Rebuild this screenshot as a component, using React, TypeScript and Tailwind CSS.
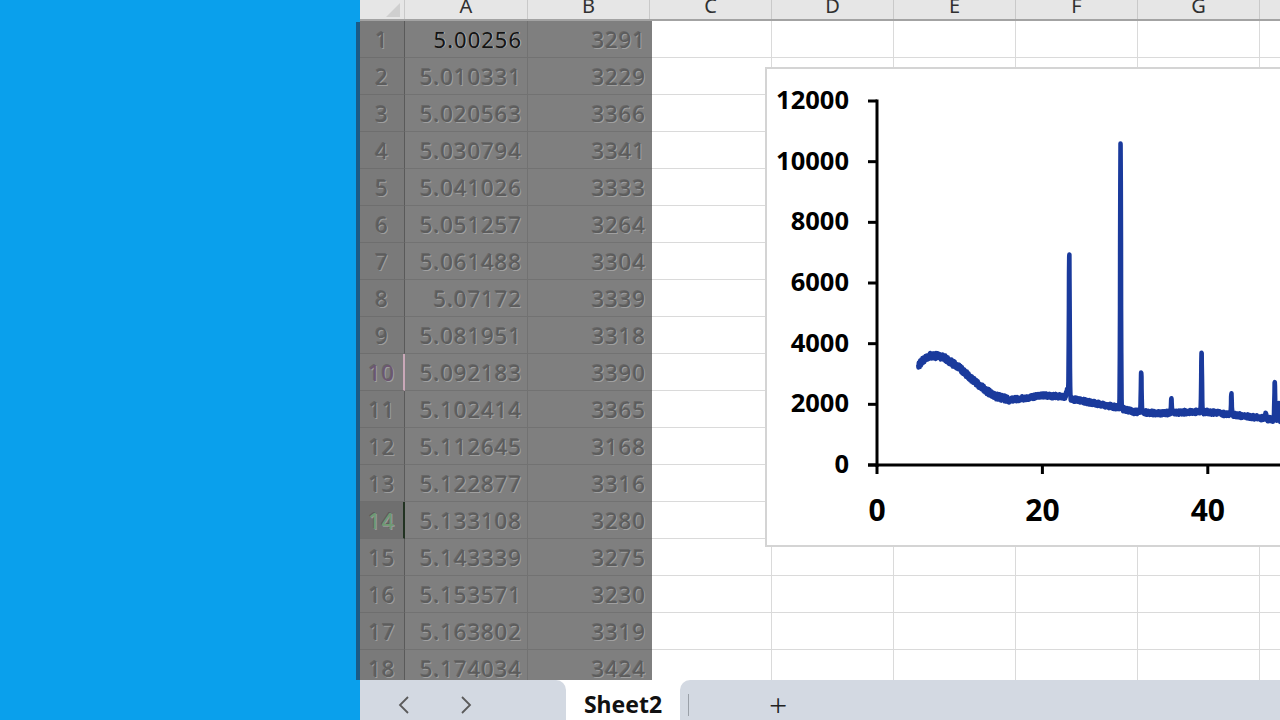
import React from "react";

const FONT = { fontFamily: '"Noto Sans", "Open Sans", sans-serif' };

// rows of the sheet: [x, y]
const rows: [string, string][] = [
  ["5.00256", "3291"],
  ["5.010331", "3229"],
  ["5.020563", "3366"],
  ["5.030794", "3341"],
  ["5.041026", "3333"],
  ["5.051257", "3264"],
  ["5.061488", "3304"],
  ["5.07172", "3339"],
  ["5.081951", "3318"],
  ["5.092183", "3390"],
  ["5.102414", "3365"],
  ["5.112645", "3168"],
  ["5.122877", "3316"],
  ["5.133108", "3280"],
  ["5.143339", "3275"],
  ["5.153571", "3230"],
  ["5.163802", "3319"],
  ["5.174034", "3424"],
];

const columns = ["C", "D", "E", "F", "G"];

// background of the scan, piecewise linear
const base: [number, number][] = [
  [5, 3250], [5.5, 3450], [6.5, 3620], [8, 3560], [10, 3200], [12, 2700],
  [14, 2300], [16, 2150], [18, 2210], [20, 2300], [22, 2260], [24, 2150],
  [27, 2000], [29, 1900], [31, 1760], [34, 1700], [38, 1750], [40, 1750],
  [43, 1660], [46, 1560], [48, 1490], [50, 1450],
];

const peaks: [number, number, number][] = [
  [23.0, 250, 0.12],
  [23.25, 4800, 0.05],
  [29.45, 8900, 0.05],
  [31.95, 1350, 0.05],
  [35.6, 550, 0.05],
  [39.25, 1950, 0.05],
  [42.85, 650, 0.05],
  [47.0, 150, 0.08],
  [48.1, 1250, 0.05],
  [48.6, 550, 0.05],
];

function baseAt(t: number) {
  for (let i = 1; i < base.length; i++) {
    const [t0, v0] = base[i - 1];
    const [t1, v1] = base[i];
    if (t <= t1) return v0 + ((t - t0) / (t1 - t0)) * (v1 - v0);
  }
  return base[base.length - 1][1];
}

let seed = 7;
function rand() {
  seed = (seed * 1103515245 + 12345) % 2147483648;
  return seed / 2147483648;
}

const X = (t: number) => 110 + t * 8.27;
const Y = (v: number) => 396 - v * 0.030333;

const points: string[] = [];
for (let t = 5; t <= 50; t += 0.02) {
  let v = baseAt(t) + (rand() - 0.5) * (t < 16 ? 200 : 150);
  for (const [c, h, s] of peaks) {
    const d = (t - c) / s;
    v += h * Math.exp(-d * d * 0.5);
  }
  points.push(`${X(t).toFixed(1)},${Y(v).toFixed(1)}`);
}

function Chart() {
  const yTicks = [0, 2000, 4000, 6000, 8000, 10000, 12000];
  const xTicks = [0, 20, 40, 60];
  return (
    <div className="absolute left-[405px] top-[67px] h-[480px] w-[530px] overflow-hidden border-2 border-[#d4d4d4] bg-white">
      <svg width="515" height="480" style={{ fontFamily: '"Open Sans", "Noto Sans", sans-serif' }}>
        <polyline
          points={points.join(" ")}
          fill="none"
          stroke="#1a3a9c"
          strokeWidth="4.5"
          strokeLinejoin="round"
          strokeLinecap="round"
        />
        <line x1="110" y1="30.5" x2="110" y2="398" stroke="#000" strokeWidth="3" />
        <line x1="101" y1="396" x2="515" y2="396" stroke="#000" strokeWidth="3" />
        {yTicks.map((v) => (
          <g key={v}>
            <line x1="101" y1={Y(v)} x2="110" y2={Y(v)} stroke="#000" strokeWidth="3" />
            <text x="82" y={Y(v) + 8} textAnchor="end" fontSize="25.5" fontWeight="700" fill="#000">
              {v}
            </text>
          </g>
        ))}
        {xTicks.map((t) => (
          <g key={t}>
            <line x1={X(t)} y1="396" x2={X(t)} y2="405" stroke="#000" strokeWidth="3" />
            <text x={X(t)} y="452" textAnchor="middle" fontSize="30" fontWeight="700" fill="#000">
              {t}
            </text>
          </g>
        ))}
      </svg>
    </div>
  );
}

const embossed = { textShadow: "1px 1px 0 rgba(190,190,190,0.55), -1px -1px 0 rgba(60,60,60,0.35)" };

function SheetRow({ n, a, b }: { n: number; a: string; b: string }) {
  const headTone =
    n === 14
      ? "bg-[#6f6f6f] text-[#6f9a72] border-r-2 border-r-[#223322]"
      : n === 10
        ? "bg-[#7c7c7c] text-[#6d5670] border-r-2 border-r-[#c9a8b8]"
        : "bg-[#7a7a7a] text-[#5d5d5d] border-r border-r-[#5a5a5a]";
  return (
    <div className="flex h-[37px] shrink-0 text-[22px] tracking-[1px]">
      <div className={`flex w-[45px] shrink-0 items-center justify-center border-b border-b-[#6e6e6e] ${headTone}`} style={embossed}>
        {n}
      </div>
      <div className="relative flex w-[123px] shrink-0 items-center justify-end border-r border-b border-[#727272] bg-[#7f7f7f] pr-[5px]">
        {n === 1 ? (
          <>
            <span className="absolute right-[4px] text-[#c8c8c8] opacity-70">{a}</span>
            <span className="relative text-[#141414]">{a}</span>
          </>
        ) : (
          <span className="text-[#5c5c5c]" style={embossed}>{a}</span>
        )}
      </div>
      <div className="flex w-[124px] shrink-0 items-center justify-end border-b border-[#727272] bg-[#7f7f7f] pr-[6px] text-[#5c5c5c]" style={embossed}>
        {b}
      </div>
      {columns.map((c, i) => (
        <div key={c} className={`shrink-0 border-r border-b border-[#dadada] bg-white ${i === 0 ? "w-[120px]" : "w-[122px]"}`} />
      ))}
      <div className="flex-1 border-b border-[#dadada] bg-white" />
    </div>
  );
}

function TabBar() {
  return (
    <div className="flex h-[40px] shrink-0 bg-white">
      <div className="flex w-[206px] items-center rounded-tr-[10px] bg-[#d3d9e2] pl-[36px] pt-[10px]">
        <svg width="16" height="22" viewBox="0 0 16 22">
          <path d="M12 3 L4 11 L12 19" fill="none" stroke="#5a5a5a" strokeWidth="1.8" />
        </svg>
        <svg width="16" height="22" viewBox="0 0 16 22" className="ml-[46px]">
          <path d="M4 3 L12 11 L4 19" fill="none" stroke="#5a5a5a" strokeWidth="1.8" />
        </svg>
      </div>
      <div className="flex w-[114px] items-center justify-center pt-[9px] text-[23px] font-bold text-[#111]">
        Sheet2
      </div>
      <div className="flex flex-1 items-center rounded-tl-[10px] bg-[#d3d9e2] pt-[10px]">
        <div className="ml-[8px] h-[22px] w-px bg-[#9aa0a8]" />
        <div className="ml-[80px] text-[32px] font-light leading-[34px] text-[#222]">+</div>
      </div>
    </div>
  );
}

export default function App() {
  return (
    <div className="flex h-[720px] w-[1280px] overflow-hidden bg-white" style={FONT}>
      <div className="relative w-[360px] shrink-0 bg-[#0aa0ec]">
        <div className="absolute top-[22px] right-0 bottom-[40px] w-[4px] bg-[#1b5a86]" />
      </div>

      <div className="relative flex flex-1 flex-col">
        <div className="flex h-[680px] flex-col overflow-hidden">
          {/* column headers */}
          <div className="flex h-[21px] shrink-0 border-b-2 border-[#a3a3a3] bg-[#e6e6e6] text-[20px] leading-[12px] text-[#303030]">
            <div className="relative w-[45px] shrink-0 overflow-hidden border-r border-[#c9c9c9]">
              <div className="absolute right-[4px] bottom-[2px] h-0 w-0 border-b-[14px] border-l-[14px] border-b-[#cfcfcf] border-l-transparent" />
            </div>
            {["A", "B", ...columns].map((c, i) => (
              <div
                key={c}
                className={`flex shrink-0 justify-center overflow-hidden border-r border-[#c9c9c9] ${i === 0 ? "w-[123px]" : "w-[122px]"}`}
              >
                {c}
              </div>
            ))}
            <div className="flex-1" />
          </div>

          {rows.map(([a, b], i) => (
            <SheetRow key={i} n={i + 1} a={a} b={b} />
          ))}
        </div>

        <TabBar />
        <Chart />
      </div>
    </div>
  );
}
